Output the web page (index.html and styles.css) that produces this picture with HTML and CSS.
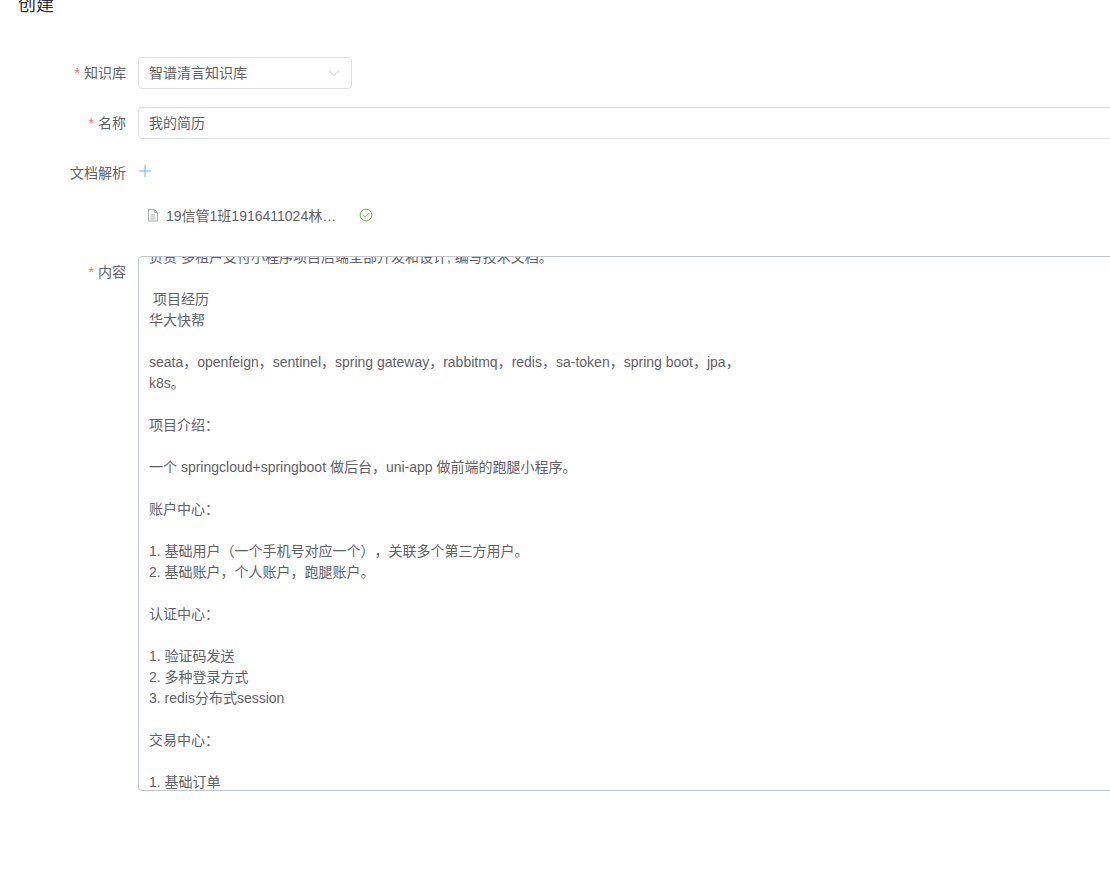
FILE: index.html
```html
<!DOCTYPE html>
<html lang="zh">
<head>
<meta charset="utf-8">
<title>创建</title>
<link rel="stylesheet" href="styles.css">
</head>
<body>
<div class="page">
  <h1 class="title">创建</h1>
  <form class="form">
    <div class="row">
      <label class="label"><span class="req">*</span>知识库</label>
      <div class="control select">
        <span>智谱清言知识库</span>
        <svg class="chev" width="12" height="12" viewBox="0 0 12 12"><path d="M.8 3.4 6 8.6l5.2-5.2" fill="none" stroke="#c0c4cc" stroke-width="1"/></svg>
      </div>
    </div>
    <div class="row">
      <label class="label"><span class="req">*</span>名称</label>
      <div class="control input">我的简历</div>
    </div>
    <div class="row row-upload">
      <label class="label">文档解析</label>
      <svg class="plus" width="12" height="12" viewBox="0 0 12 12"><path d="M6 0v12M0 6h12" stroke="#66b1ff" stroke-width="1"/></svg>
    </div>
    <div class="file">
      <svg class="doc" width="12" height="14" viewBox="0 0 12 14"><path d="M1.5 1.5h6l3 3v8.5h-9zM7.5 1.5v3h3M3.5 7h5M3.5 9h5M3.5 11h5" fill="none" stroke="#a8abb2" stroke-width="1"/></svg>
      <span class="file-name">19信管1班1916411024林…</span>
      <svg class="ok" width="14" height="14" viewBox="0 0 14 14"><circle cx="7" cy="7" r="5.9" fill="none" stroke="#67c23a" stroke-width="1"/><path d="M4.2 7.1 6.2 9l3.6-3.8" fill="none" stroke="#67c23a" stroke-width="1"/></svg>
    </div>
    <div class="row row-content">
      <label class="label"><span class="req">*</span>内容</label>
      <div class="control area">
        <div class="area-text">
          <p>负责 多租户支付小程序项目后端全部开发和设计, 编写技术文档。</p>
          <p>&nbsp;</p>
          <p>&nbsp;项目经历</p>
          <p>华大快帮</p>
          <p>&nbsp;</p>
          <p>seata，openfeign，sentinel，spring gateway，rabbitmq，redis，sa-token，spring boot，jpa，</p>
          <p>k8s。</p>
          <p>&nbsp;</p>
          <p>项目介绍：</p>
          <p>&nbsp;</p>
          <p>一个 springcloud+springboot 做后台，uni-app 做前端的跑腿小程序。</p>
          <p>&nbsp;</p>
          <p>账户中心：</p>
          <p>&nbsp;</p>
          <p>1. 基础用户（一个手机号对应一个），关联多个第三方用户。</p>
          <p>2. 基础账户，个人账户，跑腿账户。</p>
          <p>&nbsp;</p>
          <p>认证中心：</p>
          <p>&nbsp;</p>
          <p>1. 验证码发送</p>
          <p>2. 多种登录方式</p>
          <p>3. redis分布式session</p>
          <p>&nbsp;</p>
          <p>交易中心：</p>
          <p>&nbsp;</p>
          <p>1. 基础订单</p>
        </div>
      </div>
    </div>
  </form>
</div>
</body>
</html>
```

FILE: styles.css
```css
html, body {
  margin: 0;
  height: 885px;
  overflow: hidden;
  background: #fff;
}
body {
  font-family: "Liberation Sans", "Noto Sans CJK SC", sans-serif;
  font-size: 14px;
  color: #606266;
  text-spacing-trim: space-all;
}
.page {
  width: 1400px;
  padding-left: 18px;
  box-sizing: border-box;
}
.title {
  margin: -7px 0 0;
  height: 64px;
  font-size: 18px;
  font-weight: 400;
  line-height: 24px;
  color: #303133;
}
.form {
  display: flex;
  flex-direction: column;
}
.row {
  display: flex;
  align-items: flex-start;
  margin-bottom: 18px;
}
.label {
  width: 120px;
  height: 32px;
  line-height: 32px;
  padding-right: 12px;
  box-sizing: border-box;
  text-align: right;
  flex: none;
}
.req {
  color: #f56c6c;
  margin-right: 4px;
}
.control {
  box-sizing: border-box;
  border: 1px solid #dcdfe6;
  border-radius: 4px;
  height: 32px;
  line-height: 30px;
  padding: 0 11px 0 10px;
  background: #fff;
}
.select {
  width: 214px;
  display: flex;
  align-items: center;
  justify-content: space-between;
}
.chev { flex: none; }
.input { flex: 1; }
.row-upload {
  margin-bottom: 0;
  height: 32px;
}
.plus {
  margin: 8px 0 0 1px;
}
.file {
  display: flex;
  align-items: center;
  height: 21px;
  margin: 15px 0 31px 120px;
  padding-left: 9px;
}
.doc { flex: none; }
.file-name {
  margin-left: 7px;
  width: 193px;
  white-space: nowrap;
}
.ok { flex: none; }
.row-content { margin-bottom: 0; }
.area {
  flex: 1;
  height: 535px;
  padding: 0 10px;
  border-color: #c0c4cc;
  overflow: hidden;
}
.area-text {
  margin-top: -10px;
  line-height: 21px;
}
.area-text p {
  margin: 0;
  white-space: pre-wrap;
}
```
